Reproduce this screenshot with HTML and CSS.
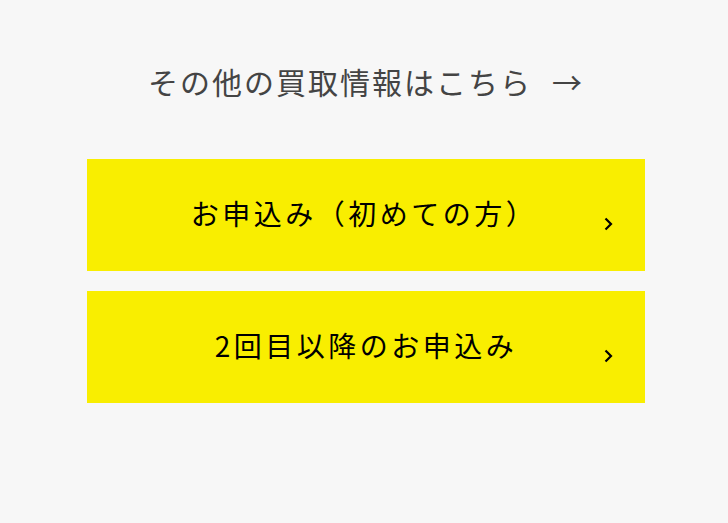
FILE: index.html
```html
<!DOCTYPE html>
<html lang="ja">
<head>
<meta charset="utf-8">
<link rel="stylesheet" href="styles.css">
</head>
<body>
<main class="wrap">
  <a class="more" href="#">その他の買取情報はこちら<span class="arrow">→</span></a>
  <div class="buttons">
    <a class="btn" href="#"><span class="label label-first">お申込み（初めての方）</span><span class="chev"><svg width="9" height="14" viewBox="0 0 9 14"><path d="M1.5 1.5 L7 7 L1.5 12.5" fill="none" stroke="#000" stroke-width="2.2"/></svg></span></a>
    <a class="btn" href="#"><span class="label">2回目以降のお申込み</span><span class="chev"><svg width="9" height="14" viewBox="0 0 9 14"><path d="M1.5 1.5 L7 7 L1.5 12.5" fill="none" stroke="#000" stroke-width="2.2"/></svg></span></a>
  </div>
</main>
</body>
</html>
```
FILE: styles.css
```css
html, body {
  margin: 0;
  padding: 0;
  background: #f7f7f7;
}
body {
  font-family: "Noto Sans CJK JP", "Noto Sans", sans-serif;
  width: 728px;
  height: 523px;
}
.wrap {
  display: flex;
  flex-direction: column;
  align-items: center;
  padding-top: 58px;
  padding-left: 4px;
}
.more {
  color: #444;
  text-decoration: none;
  font-size: 30px;
  letter-spacing: 2px;
  line-height: 46px;
}
.arrow {
  margin-left: 20px;
}
.buttons {
  margin-top: 55px;
  display: flex;
  flex-direction: column;
  gap: 20px;
  width: 558px;
}
.btn {
  position: relative;
  display: flex;
  align-items: center;
  justify-content: center;
  height: 112px;
  background: #f9ee00;
  color: #000;
  text-decoration: none;
  font-size: 28px;
  letter-spacing: 3.5px;
}
.label {
  margin-top: -4px;
}
.label-first {
  margin-right: 4px;
}
.chev {
  position: absolute;
  right: 32px;
  top: 58px;
  line-height: 0;
}
```
